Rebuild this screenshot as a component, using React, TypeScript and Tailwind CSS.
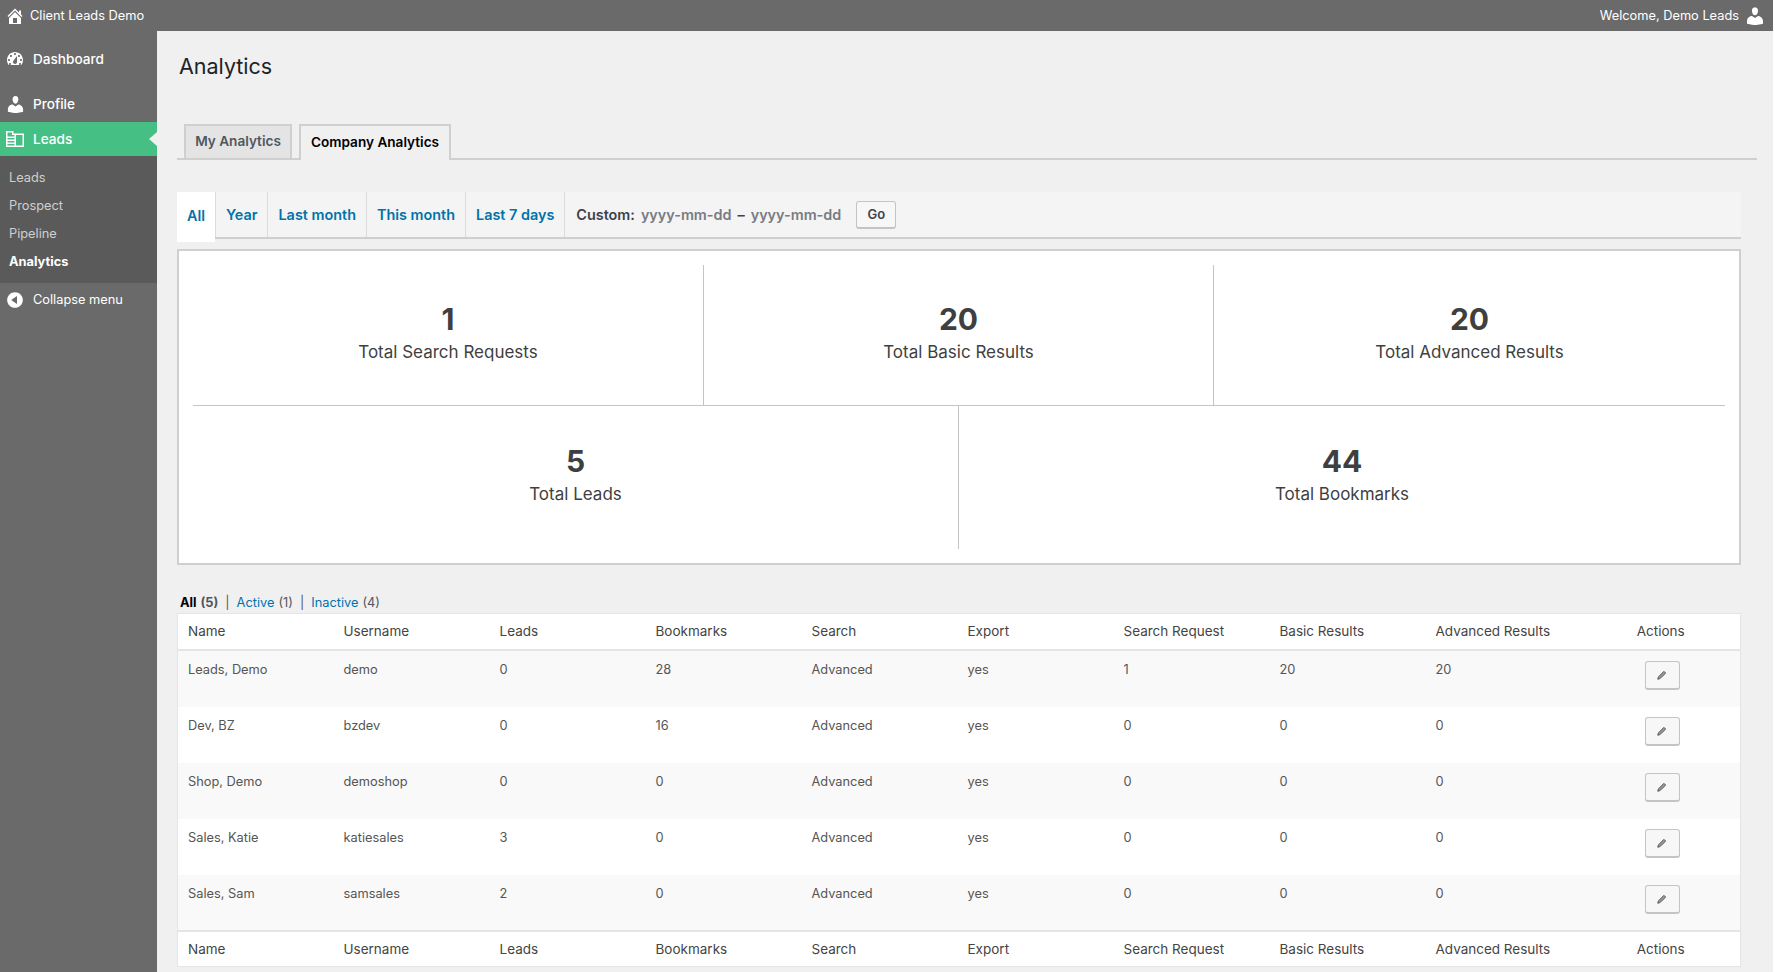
import { ReactNode } from "react";

const house =
  "M16 8.5l1.53 1.53-1.06 1.06L10 4.62l-6.47 6.47-1.06-1.06L10 2.5l4 4v-2h2v4zm-6-2.46l6 5.99V18H4v-5.97zM12 17v-5H8v5h4z";
const gauge =
  "M3.76 16h12.48c1.1-1.37 1.76-3.11 1.76-5 0-4.42-3.58-8-8-8s-8 3.58-8 8c0 1.89.66 3.63 1.76 5zM10 4c.55 0 1 .45 1 1s-.45 1-1 1-1-.45-1-1 .45-1 1-1zM6 6c.55 0 1 .45 1 1s-.45 1-1 1-1-.45-1-1 .45-1 1-1zm8 0c.55 0 1 .45 1 1s-.45 1-1 1-1-.45-1-1 .45-1 1-1zm-5.37 5.55L12 7v6c0 1.1-.9 2-2 2s-2-.9-2-2c0-.57.24-1.08.63-1.45zM4 10c.55 0 1 .45 1 1s-.45 1-1 1-1-.45-1-1 .45-1 1-1zm12 0c.55 0 1 .45 1 1s-.45 1-1 1-1-.45-1-1 .45-1 1-1zM5 14c.55 0 1 .45 1 1s-.45 1-1 1-1-.45-1-1 .45-1 1-1zm10 0c.55 0 1 .45 1 1s-.45 1-1 1-1-.45-1-1 .45-1 1-1z";
const person =
  "M10 9.25c-2.27 0-2.73-3.44-2.73-3.44C7 4.02 7.82 2 9.97 2c2.16 0 2.98 2.02 2.71 3.81 0 0-.41 3.44-2.68 3.44zm0 2.57L12.72 10c2.39 0 4.52 2.33 4.52 4.53v2.49s-3.65 1.13-7.24 1.13c-3.65 0-7.24-1.13-7.24-1.13v-2.49c0-2.25 1.94-4.48 4.47-4.48z";
const collapse =
  "M10 2.16c4.33 0 7.84 3.51 7.84 7.84s-3.51 7.84-7.84 7.84S2.16 14.33 2.16 10 5.71 2.16 10 2.16zm2 11.72V6.12L6.18 9.97z";

const Dash = ({ d, className }: { d: string; className: string }) => (
  <svg viewBox="0 0 20 20" fill="currentColor" fillRule="evenodd" className={className}>
    <path d={d} />
  </svg>
);

const LeadsIcon = () => (
  <svg viewBox="0 0 18 16" className="w-[18px] h-[16px] text-white" fill="none" stroke="currentColor" strokeWidth="1.5">
    <path d="M.75 15.25V.75h6v2.5h10.5v12z" />
    <path d="M9.25 3v12M.75 6.25h8.5M.75 9.25h8.5M.75 12.25h8.5" />
  </svg>
);

const PencilIcon = () => (
  <svg viewBox="0 0 12 12" className="w-[10px] h-[10px]" fill="none" stroke="#555" strokeWidth="1.1">
    <path d="M8.3 1.6l2.1 2.1-6.6 6.6-2.9.8.8-2.9z" fill="#999" />
  </svg>
);

const MenuItem = ({ icon, label, className }: { icon: ReactNode; label: string; className: string }) => (
  <div className={`flex items-center text-white font-medium ${className}`}>
    <span className="w-[30px] mr-[3px] flex justify-center">{icon}</span>
    <span>{label}</span>
  </div>
);

const columns = ["Name", "Username", "Leads", "Bookmarks", "Search", "Export", "Search Request", "Basic Results", "Advanced Results"];

const users = [
  ["Leads, Demo", "demo", "0", "28", "Advanced", "yes", "1", "20", "20"],
  ["Dev, BZ", "bzdev", "0", "16", "Advanced", "yes", "0", "0", "0"],
  ["Shop, Demo", "demoshop", "0", "0", "Advanced", "yes", "0", "0", "0"],
  ["Sales, Katie", "katiesales", "3", "0", "Advanced", "yes", "0", "0", "0"],
  ["Sales, Sam", "samsales", "2", "0", "Advanced", "yes", "0", "0", "0"],
];

const Stat = ({ value, label, className }: { value: string; label: string; className: string }) => (
  <div className={`flex flex-col items-center ${className}`}>
    <div className="text-[30px] leading-[39px] font-bold text-[#3f3f3f]">{value}</div>
    <div className="text-[17px] leading-[24px] mt-[1px] text-[#3f3f3f]">{label}</div>
  </div>
);

const HeadRow = () => (
  <tr className="h-[36px] bg-white">
    {columns.map((c) => (
      <td key={c} className="pl-[10px] text-[13.5px] text-[#444]">{c}</td>
    ))}
    <td className="text-center text-[13.5px] text-[#444]">Actions</td>
  </tr>
);

const ranges = ["Year", "Last month", "This month", "Last 7 days"];

export default function App() {
  return (
    <div className="w-[1775px] h-[972px] overflow-hidden bg-white" style={{ fontFamily: "Inter, 'Noto Sans', sans-serif" }}>
      <div className="w-[1773px] h-full flex flex-col bg-[#f0f0f1]">
        <header className="h-[31px] shrink-0 bg-[#6a6a6a] flex items-center justify-between text-white text-[12.8px] pl-[5px] pr-[7px]">
          <div className="flex items-center gap-[5px]">
            <Dash d={house} className="w-[20px] h-[20px]" />
            <span>Client Leads Demo</span>
          </div>
          <div className="flex items-center gap-[5px]">
            <span>Welcome, Demo Leads</span>
            <Dash d={person} className="w-[22px] h-[22px]" />
          </div>
        </header>

        <div className="flex flex-1 min-h-0">
          <aside className="w-[157px] shrink-0 bg-[#6a6a6a] pt-[13px]">
            <MenuItem icon={<Dash d={gauge} className="w-[20px] h-[20px]" />} label="Dashboard" className="h-[30px] text-[13.6px]" />
            <MenuItem icon={<Dash d={person} className="w-[21px] h-[21px]" />} label="Profile" className="h-[30px] mt-[15px] text-[13.6px]" />
            <div className="relative mt-[3px]">
              <MenuItem icon={<LeadsIcon />} label="Leads" className="h-[34px] bg-[#46bf85] text-[13.6px]" />
              <span className="absolute right-0 top-[10px] border-y-[7px] border-r-[8px] border-y-transparent border-r-[#f0f0f1]" />
            </div>
            <nav className="bg-[#5a5a5a] h-[127px] pt-[8px] pl-[9px] text-[12.8px] text-[#cfcfcf]">
              <div className="h-[28px] leading-[28px]">Leads</div>
              <div className="h-[28px] leading-[28px]">Prospect</div>
              <div className="h-[28px] leading-[28px]">Pipeline</div>
              <div className="h-[28px] leading-[28px] text-white font-bold">Analytics</div>
            </nav>
            <MenuItem icon={<Dash d={collapse} className="w-[20px] h-[20px]" />} label="Collapse menu" className="h-[33px] text-[12.8px] !font-normal" />
          </aside>

          <main className="flex-1 min-w-0 pl-[20px]">
            <h1 className="ml-[2px] mt-[21px] text-[21.5px] leading-[29px] text-[#1d2327]">Analytics</h1>

            <div className="mt-[43px] w-[1580px] h-[36px] pl-[7px] flex items-end gap-[7px] border-b-2 border-[#cfcfcf]">
              <div className="h-[36px] -mb-[2px] w-[108px] pb-[2px] flex items-center justify-center border-2 border-[#cfcfcf] bg-[#e4e4e5] text-[13.6px] font-semibold text-[#50575e]">
                My Analytics
              </div>
              <div className="h-[36px] -mb-[2px] w-[152px] pb-[2px] flex items-center justify-center border-2 border-b-0 border-[#cfcfcf] bg-[#f0f0f1] text-[13.6px] font-semibold text-black">
                Company Analytics
              </div>
            </div>

            <div className="relative mt-[32px] w-[1564px] h-[47px] bg-[#f4f4f4] border-b-2 border-[#cfcfcf] flex items-center text-[14.4px] font-semibold text-[#0073aa]">
              <div className="h-[50px] -mb-[3px] pb-[3px] self-start w-[38px] bg-white flex items-center justify-center">All</div>
              {ranges.map((r) => (
                <div key={r} className="h-full px-[10px] flex items-center border-l border-[#dcdcde] first:border-l-0">{r}</div>
              ))}
              <div className="h-full pl-[11px] flex items-center border-l border-[#dcdcde] text-[#3c434a]">
                Custom:
                <span className="ml-[6px] text-[#787c82]">yyyy-mm-dd</span>
                <span className="mx-[6px]">–</span>
                <span className="text-[#787c82]">yyyy-mm-dd</span>
              </div>
              <button className="ml-[15px] w-[40px] h-[28px] pt-[2px] rounded-[3px] border border-[#c3c4c7] border-b-2 bg-[#f7f7f7] text-[13px] font-semibold text-[#3c434a]">Go</button>
            </div>

            <div className="mt-[10px] w-[1564px] h-[316px] border-2 border-[#cfcfcf] bg-white px-[14px] py-[14px]">
              <div className="flex h-[141px] border-b border-[#c3c4c7] pt-0">
                <Stat value="1" label="Total Search Requests" className="w-[511px] pt-[35px] border-r border-[#c3c4c7]" />
                <Stat value="20" label="Total Basic Results" className="w-[510px] pt-[35px] border-r border-[#c3c4c7]" />
                <Stat value="20" label="Total Advanced Results" className="flex-1 pt-[35px]" />
              </div>
              <div className="flex h-[143px]">
                <Stat value="5" label="Total Leads" className="w-[766px] pt-[36px] border-r border-[#c3c4c7]" />
                <Stat value="44" label="Total Bookmarks" className="flex-1 pt-[36px]" />
              </div>
            </div>

            <div className="mt-[28px] ml-[3px] h-[20px] flex items-center text-[12.8px] text-[#50575e]">
              <b className="text-black font-bold">All</b>
              <b className="ml-[4px] font-bold">(5)</b>
              <span className="mx-[7px]">|</span>
              <span className="text-[#0073aa]">Active</span>
              <span className="ml-[4px]">(1)</span>
              <span className="mx-[7px]">|</span>
              <span className="text-[#0073aa]">Inactive</span>
              <span className="ml-[4px]">(4)</span>
            </div>

            <table className="w-[1564px] table-fixed border-collapse border border-[#e5e5e5] bg-white">
              <colgroup>
                {columns.map((c) => (
                  <col key={c} className="w-[156px]" />
                ))}
                <col />
              </colgroup>
              <thead className="border-b-2 border-[#e5e5e5]">
                <HeadRow />
              </thead>
              <tbody>
                {users.map((u, i) => (
                  <tr key={u[1]} className={`${i === 0 ? "h-[57px]" : "h-[56px]"} ${i % 2 === 0 ? "bg-[#f9f9f9]" : "bg-white"}`}>
                    {u.map((v, j) => (
                      <td key={j} className="pl-[10px] pt-[9px] align-top text-[12.8px] text-[#555]">{v}</td>
                    ))}
                    <td className="align-top pt-[10px]">
                      <button className="ml-[63px] flex w-[35px] h-[29px] items-center justify-center rounded-[3px] border border-[#c3c4c7] border-b-2 bg-[#f7f7f7]">
                        <PencilIcon />
                      </button>
                    </td>
                  </tr>
                ))}
              </tbody>
              <tfoot className="border-t-2 border-[#e5e5e5]">
                <HeadRow />
              </tfoot>
            </table>
          </main>
        </div>
      </div>
    </div>
  );
}
